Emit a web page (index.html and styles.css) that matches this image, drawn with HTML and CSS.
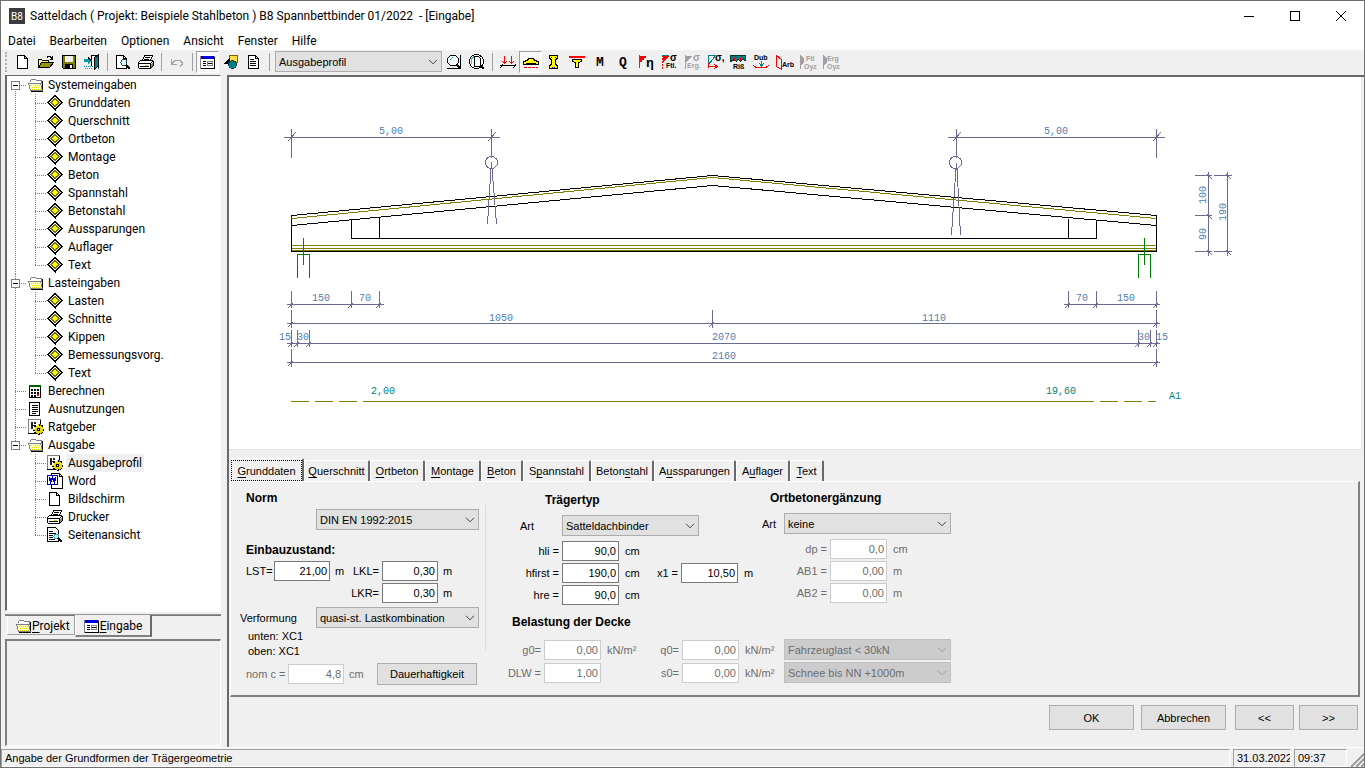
FILE: index.html
```html
<!DOCTYPE html>
<html lang="de">
<head>
<meta charset="utf-8">
<title>Satteldach - B8 Spannbettbinder</title>
<link rel="stylesheet" href="styles.css">
</head>
<body>
<svg class="defs" aria-hidden="true">
  <symbol id="chev" viewBox="0 0 10 6"><path d="M1 .8L5 4.8L9 .8" fill="none" stroke="currentColor"/></symbol>
  <symbol id="diamond" viewBox="0 0 16 16"><path d="M8 .5L15 7.500L8 14.500L1 7.500z" fill="#fff" stroke="#000"/><path d="M8 3.500L12 7.500L8 11.500L4 7.500z" fill="#ff0" stroke="#707020"/><path d="M8.500 0v1M8.500 14v2" stroke="#000"/></symbol>
  <symbol id="folder" viewBox="0 0 16 16"><path d="M2.500 4.500v-1l1-1h4l1 1h5v3" fill="#fff" stroke="#808080"/><path d="M.5 6.500h12l2 7h-12z" fill="#ffffc0" stroke="#808080"/><path d="M14.500 4v9M3 14.500h12" fill="none" stroke="#000"/><path d="M3 8.500h1M5 8.500h1M7 8.500h1M9 8.500h1M11 8.500h1M4 10.500h1M6 10.500h1M8 10.500h1M10 10.500h1M4 12.500h1M6 12.500h1M8 12.500h1M10 12.500h1M12 12.500h1" stroke="#e8e000"/></symbol>
  <symbol id="page" viewBox="0 0 16 16"><path d="M2.500 1.500h7l3 3v10h-10zM9.500 1.500v3h3" fill="#fff" stroke="#000"/></symbol>
  <symbol id="printer" viewBox="0 0 16 16"><path d="M4.500 6.500l2-5h8l-2 5" fill="#fff" stroke="#000"/><path d="M7 3.500h5M6 5.500h5" stroke="#000"/><path d="M.5 8.500l2-2h12l1 1v4l-3 3h-11l-1-1z" fill="#fff" stroke="#000"/><path d="M1 9.500h11l3-2M12.500 10v4M2 12.500h9" fill="none" stroke="#000"/><path d="M7 11h3" stroke="#e0d000"/><path d="M13 10l2-2v3l-2 2z" fill="#808080"/></symbol>
  <symbol id="gear" viewBox="0 0 16 16"><path d="M.5 .5h12v14H.5z" fill="#fff" stroke="#808080"/><path d="M0 14.500h9M12.500 1v4" stroke="#000"/><path d="M3 3h2v7H3zM6 3h2v2H6zM5 6h3v1H5z" fill="#222"/><path d="M10.500 5v11M5 10.500h11M6.500 6.500l8 8M14.500 6.500l-8 8" stroke="#000" stroke-width="2"/><path d="M8 7h5l2 2v3l-2 2H8l-1-2V9z" fill="#e8d800"/><path d="M10.500 5v2M10.500 14v1M5 10.500h2M14 10.500h1" stroke="#e8d800"/><path d="M9.500 9.500h2v2h-2z" fill="#fff" stroke="#000"/></symbol>
  <symbol id="form" viewBox="0 0 16 16"><path d="M.5 2.500h14v12H.5z" fill="#fff" stroke="#808080"/><path d="M1 2h13v3H1z" fill="#0000d8"/><path d="M14.500 3v11.500H1" fill="none" stroke="#000"/><path d="M3 7.500h3M3 9.500h3M3 11.500h3" stroke="#000"/><path d="M7.500 7.500h5v4h-5z" fill="#fff" stroke="#808080"/><path d="M8 9.500h4" stroke="#000"/></symbol>
  <symbol id="lines" viewBox="0 0 16 16"><path d="M1.500 1.500h10v13h-10z" fill="#fff" stroke="#000"/><path d="M4 4.500h6M4 6.500h6M4 8.500h6M4 10.500h6M4 12.500h4" stroke="#000"/></symbol>
  <symbol id="preview" viewBox="0 0 16 16"><path d="M1.500 1.500h7l3 3v10h-10zM8.500 1.500v3h3" fill="#fff" stroke="#000"/><circle cx="9" cy="8.500" r="3" fill="#cff" stroke="#404040"/><path d="M11 11l4 4" stroke="#000" stroke-width="2"/></symbol>
</svg>

<header class="titlebar">
  <svg class="logo" viewBox="0 0 16 16"><path d="M0 0h16v16H0z" fill="#3c3c3c"/><text x="2" y="12" fill="#fff" font-size="10">B8</text></svg>
  <h1>Satteldach ( Projekt: Beispiele Stahlbeton ) B8 Spannbettbinder 01/2022&nbsp; - [Eingabe]</h1>
  <div class="syskeys">
    <button aria-label="Minimieren"><svg viewBox="0 0 12 12"><path d="M1 6.500h10" stroke="#000"/></svg></button>
    <button aria-label="Maximieren"><svg viewBox="0 0 12 12"><path d="M1.500 1.500h9v9h-9z" fill="none" stroke="#000"/></svg></button>
    <button aria-label="Schließen"><svg class="smooth" viewBox="0 0 12 12"><path d="M1 1l10 10M11 1L1 11" stroke="#000"/></svg></button>
  </div>
</header>

<nav class="menubar">
  <button>Datei</button><button>Bearbeiten</button><button>Optionen</button><button>Ansicht</button><button>Fenster</button><button>Hilfe</button>
</nav>

<div class="toolbar" role="toolbar" aria-label="Werkzeuge">
  <span class="grip"></span>
  <button class="tool" aria-label="Neu"><svg><use href="#page"/></svg></button>
  <button class="tool" aria-label="Öffnen"><svg viewBox="0 0 16 16"><path d="M.5 13.500v-8h3l1 1h6v3" fill="#ff8" stroke="#000"/><path d="M.5 13.500l3-5h12l-4 5z" fill="#9a9400" stroke="#000"/><path d="M9 3.500l1-1h2l2 2M14.500 1.500v4h-3" fill="none" stroke="#000"/></svg></button>
  <button class="tool" aria-label="Speichern"><svg viewBox="0 0 16 16"><path d="M1.500 1.500h13v13h-12l-1-1z" fill="#808000" stroke="#000"/><path d="M4 2h8v6H4z" fill="#f0f0f0"/><path d="M4 10h8v5H4z" fill="#000"/><path d="M9 11h2v3H9z" fill="#fff"/></svg></button>
  <button class="tool" aria-label="Beenden"><svg viewBox="0 0 16 16"><path d="M7.500 12V1.500h7v12" fill="#fff" stroke="#000"/><path d="M10 4l4-3v11l-4 4z" fill="#008080" stroke="#000"/><path d="M0 5h4V2l4 4.500L4 11V8H0z" fill="#00a0a8"/><path d="M4 3.500l3 3" stroke="#000"/><path d="M0 12.500h9M1 14.500h8M14 14.500h2" stroke="#00a0a8" stroke-dasharray="1 1"/></svg></button>
  <span class="sep"></span>
  <button class="tool" aria-label="Seitenansicht"><svg><use href="#preview"/></svg></button>
  <button class="tool" aria-label="Drucken"><svg><use href="#printer"/></svg></button>
  <span class="sep"></span>
  <button class="tool" aria-label="Rückgängig" disabled><svg viewBox="0 0 16 16"><path d="M2.500 5v5h5M3 9.500l3-3h5l2 2v2l-2 2" fill="none" stroke="#a0a0a0"/></svg></button>
  <span class="sep"></span>
  <button class="tool on" aria-label="Eingabe"><svg><use href="#form"/></svg></button>
  <button class="tool" aria-label="Grafik"><svg viewBox="0 0 16 16"><path d="M6.500 1.500h8v7h-8z" fill="#ffe040" stroke="#806000"/><path d="M0 10l7-7v7z" fill="#000"/><circle cx="9.500" cy="10.500" r="4" fill="#008080" stroke="#003860"/></svg></button>
  <button class="tool" aria-label="Text"><svg viewBox="0 0 16 16"><path d="M2.500 1.500h7l3 3v10h-10zM9.500 1.500v3h3" fill="#fff" stroke="#000"/><path d="M4 5.500h4M4 7.500h6M4 9.500h6M4 11.500h6" stroke="#000"/></svg></button>
  <span class="sep"></span>
  <span class="combo profile"><select aria-label="Profil"><option>Ausgabeprofil</option></select><svg><use href="#chev"/></svg></span>
  <button class="tool" aria-label="Zoom Fenster"><svg viewBox="0 0 16 16"><path d="M14.500 1v13.500H1" fill="none" stroke="#000"/><circle cx="7" cy="6.500" r="5.500" fill="#fff" stroke="#000"/><path d="M4 6l3-3" stroke="#0cc"/><path d="M10.500 10.500l4 4" stroke="#000" stroke-width="2"/></svg></button>
  <button class="tool" aria-label="Zoom alles"><svg viewBox="0 0 16 16"><circle cx="7.500" cy="7.500" r="7" fill="#fff" stroke="#000"/><path d="M2.500 10V5l3-3" stroke="#0dd" fill="none"/><path d="M5.500 2.500h4l2 2v8h-6z" fill="#fff" stroke="#000"/><path d="M12 12l3 3" stroke="#000" stroke-width="2"/></svg></button>
  <span class="sep"></span>
  <button class="tool" aria-label="Lasten"><svg viewBox="0 0 16 16"><path d="M0 11.500h16M.5 14l2-4M13.500 14l2-4" stroke="#000"/><path d="M4.500 2v8M2.500 7.500l2 2l2-2M11.500 2v8M9.500 7.500l2 2l2-2" fill="none" stroke="#f00"/></svg></button>
  <button class="tool on" aria-label="System"><svg viewBox="0 0 16 16"><path d="M.5 10.500v-3l4-1l1-2h5l1 2l4 1v3z" fill="#ff0" stroke="#000"/><path d="M3 9.500h10" stroke="#000"/><path d="M1 13.500h14" stroke="#f00" stroke-dasharray="3 1"/></svg></button>
  <button class="tool" aria-label="Querschnitt I"><svg viewBox="0 0 16 16"><path d="M3.500 1.500h8v3l-2 1v5l2 1v3h-8v-3l2-1v-5l-2-1z" fill="#ff0" stroke="#000"/><path d="M5 3h1M9 3h1M6 13h1M8 13h1" stroke="#00f"/></svg></button>
  <button class="tool" aria-label="Querschnitt T"><svg viewBox="0 0 16 16"><path d="M0 2h16v2H0z" fill="#f00"/><path d="M3.500 5.500h9v2l-3 1v5h-3v-5l-3-1z" fill="#ff0" stroke="#000"/></svg></button>
  <button class="tool" aria-label="Moment"><svg viewBox="0 0 16 16"><text class="big" x="4" y="12">M</text></svg></button>
  <button class="tool" aria-label="Querkraft"><svg viewBox="0 0 16 16"><text class="big" x="4" y="12">Q</text></svg></button>
  <button class="tool" aria-label="Ausnutzung"><svg viewBox="0 0 16 16"><path d="M1.500 1v13" stroke="#008080"/><path d="M2 2h6v2H6v2H4v2H2z" fill="#f00"/><text class="eta" x="8" y="13">η</text></svg></button>
  <button class="tool" aria-label="Spannung Fertigteil"><svg viewBox="0 0 16 16"><path d="M1.500 1v14" stroke="#f00" stroke-dasharray="2 1"/><path d="M2 2h6L2 8z" fill="#f00"/><path d="M1 1.500h7" stroke="#008080"/><text class="sig" x="9" y="7">σ</text><text x="5" y="14">Ftl.</text></svg></button>
  <button class="tool" aria-label="Spannung Ergänzung" disabled><svg class="dim" viewBox="0 0 16 16"><path d="M1.500 1v14" stroke="#a0a0a0"/><path d="M2 2h6L2 8z" fill="#a0a0a0"/><text class="sig" x="9" y="7">σ</text><text x="3" y="14">Erg.</text></svg></button>
  <button class="tool" aria-label="Spannungen"><svg viewBox="0 0 16 16"><path d="M1.500 14V1.500h7L2 10" fill="none" stroke="#008080"/><path d="M1 12.500h9M7 10l3 2.500L7 15M1.500 9v5" stroke="#f00" fill="none"/><text class="sig" x="8" y="7">σ,</text></svg></button>
  <button class="tool" aria-label="Riss"><svg viewBox="0 0 16 16"><path d="M.5 1.500h15v5l-3-1l-2 2l-2-2l-2 2l-2-2l-4 2z" fill="#008080" stroke="#003838"/><path d="M4 7V3M10 7V3" stroke="#f00"/><text x="3" y="15">Riß</text></svg></button>
  <button class="tool" aria-label="Dübel"><svg viewBox="0 0 16 16"><text x="1" y="6">Dub</text><path d="M8.500 7v5M6 9l2.500 3L11 9" fill="none" stroke="#008080"/><path d="M0 11l3 2.500h10L16 11" fill="none" stroke="#f00"/></svg></button>
  <button class="tool" aria-label="Arbeit"><svg viewBox="0 0 16 16"><path d="M.5 12.500v-11l5 4v10z" fill="none" stroke="#f00"/><text x="6" y="13">Arb</text></svg></button>
  <button class="tool" aria-label="Fertigteil yz" disabled><svg class="dim" viewBox="0 0 16 16"><path d="M1 1v14h1v-4l3-3V4L2 2V1z" fill="#a0a0a0"/><text x="7" y="7">Ftl</text><text x="5" y="15">Oyz</text></svg></button>
  <button class="tool" aria-label="Ergänzung yz" disabled><svg class="dim" viewBox="0 0 16 16"><path d="M1 1v14h1v-4l3-3V4L2 2V1z" fill="#a0a0a0"/><text x="5" y="7">Erg</text><text x="5" y="15">Oyz</text></svg></button>
</div>

<div class="workspace">
  <aside class="side">
    <div class="treebox">
      <ul class="tree">
        <li><div class="node"><button class="toggle" aria-label="Systemeingaben schließen"></button><svg><use href="#folder"/></svg><span>Systemeingaben</span></div>
          <ul>
            <li><svg><use href="#diamond"/></svg><span>Grunddaten</span></li>
            <li><svg><use href="#diamond"/></svg><span>Querschnitt</span></li>
            <li><svg><use href="#diamond"/></svg><span>Ortbeton</span></li>
            <li><svg><use href="#diamond"/></svg><span>Montage</span></li>
            <li><svg><use href="#diamond"/></svg><span>Beton</span></li>
            <li><svg><use href="#diamond"/></svg><span>Spannstahl</span></li>
            <li><svg><use href="#diamond"/></svg><span>Betonstahl</span></li>
            <li><svg><use href="#diamond"/></svg><span>Aussparungen</span></li>
            <li><svg><use href="#diamond"/></svg><span>Auflager</span></li>
            <li><svg><use href="#diamond"/></svg><span>Text</span></li>
          </ul></li>
        <li><div class="node"><button class="toggle" aria-label="Lasteingaben schließen"></button><svg><use href="#folder"/></svg><span>Lasteingaben</span></div>
          <ul>
            <li><svg><use href="#diamond"/></svg><span>Lasten</span></li>
            <li><svg><use href="#diamond"/></svg><span>Schnitte</span></li>
            <li><svg><use href="#diamond"/></svg><span>Kippen</span></li>
            <li><svg><use href="#diamond"/></svg><span>Bemessungsvorg.</span></li>
            <li><svg><use href="#diamond"/></svg><span>Text</span></li>
          </ul></li>
        <li><div class="node leaf"><svg viewBox="0 0 16 16"><path d="M1.500 2.500h11v12h-11z" fill="#fff" stroke="#000"/><path d="M1 2h12v2H1z" fill="#006000"/><path d="M3 6.500h8M3 9.500h8M3 12.500h5" stroke="#000" stroke-width="2" stroke-dasharray="2 1"/><path d="M9 11h2v2H9z" fill="#f00"/></svg><span>Berechnen</span></div></li>
        <li><div class="node leaf"><svg><use href="#lines"/></svg><span>Ausnutzungen</span></div></li>
        <li><div class="node leaf"><svg><use href="#gear"/></svg><span>Ratgeber</span></div></li>
        <li><div class="node"><button class="toggle" aria-label="Ausgabe schließen"></button><svg><use href="#folder"/></svg><span>Ausgabe</span></div>
          <ul>
            <li><svg><use href="#gear"/></svg><span class="picked">Ausgabeprofil</span></li>
            <li><svg viewBox="0 0 16 16"><path d="M4.500 .5h8l3 3v12h-11zM12.500 .5v3h3" fill="#fff" stroke="#000"/><path d="M.5 2.500h10v9H.5z" fill="#fff" stroke="#0000a8"/><path d="M2.500 4l1 5L5.500 5l2 4L8.500 4" fill="none" stroke="#0000c0" stroke-width="1.500"/></svg><span>Word</span></li>
            <li><svg><use href="#page"/></svg><span>Bildschirm</span></li>
            <li><svg><use href="#printer"/></svg><span>Drucker</span></li>
            <li><svg viewBox="0 0 16 16"><path d="M.5 .5h8l3 3v11H.5z" fill="#fff" stroke="#000"/><path d="M2 4.500h4M2 6.500h7M2 8.500h4M2 10.500h4M2 12.500h6" stroke="#000"/><circle cx="9.500" cy="9.500" r="2.500" fill="#8ff" stroke="#60a0a0"/><path d="M11 11l4 4" stroke="#000" stroke-width="1.500"/></svg><span>Seitenansicht</span></li>
          </ul></li>
      </ul>
    </div>
    <div class="sidetabs">
      <button class="stab"><svg><use href="#folder"/></svg><span><u>P</u>rojekt</span></button>
      <button class="stab current"><svg><use href="#form"/></svg><span><u>E</u>ingabe</span></button>
    </div>
    <div class="infobox"></div>
  </aside>

  <main class="content">
    <div class="canvas">
      <svg class="drawing" viewBox="229 77 1132 372" role="img" aria-label="Ansicht des Satteldachbinders">
        <g stroke="#000">
          <path d="M291.500 251.500V215.500L712.500 175.500L1156.500 215.500V251.500zM291.500 225.500L712.500 185.500L1156.500 225.500M351.500 220V238.500H1096.500V221M379.500 217.500V238.500M1068.500 218.500V238.500"/>
        </g>
        <path stroke="#808000" d="M291.500 218.500L712.500 177.500L1156.500 218.500M292 245.500H1156M292 248.500H1156M292 250.500H1156M291 401.500h18M315 401.500h18M339 401.500h18M363 401.500H1094M1100 401.500h18M1124 401.500h18M1148 401.500h8"/>
        <path stroke="#008000" d="M303.500 238V265M297.500 278V254.500H309.500V278M1144.500 238V265M1138.500 278V254.500H1150.500V278"/>
        <g stroke="#6a6a94">
          <path d="M284 137.500H500M291.500 129V158M491.500 129V158M288 141L296 132M488 141L496 132M948 137.500H1165M956.500 129V158M1156.500 129V158M953 141L961 132M1153 141L1161 132"/>
          <circle cx="491.500" cy="162.500" r="6"/><circle cx="955.500" cy="162.500" r="6"/>
          <path d="M491.500 162V169M491 168L487.500 224M492 168L496.500 224M956.500 163V170M956 168L951.500 235M957 168L960.500 235"/>
          <path d="M287 304.500H384M291.500 291V308M351.500 291V308M379.500 291V308M1064 304.500H1160M1068.500 291V308M1096.500 291V308M1156.500 291V308"/>
          <path d="M287 323.500H1160M291.500 310V328M712.500 310V328M1156.500 310V328"/>
          <path d="M287 343.500H1160M291.500 330V347M297.500 330V347M309.500 330V347M1138.500 330V347M1150.500 330V347M1156.500 330V347"/>
          <path d="M287 362.500H1160M291.500 349V367M1156.500 349V367"/>
          <path d="M288 308l5-5M348 308l5-5M376 308l5-5M1065 308l5-5M1093 308l5-5M1153 308l5-5M288 327l5-5M709 327l5-5M1153 327l5-5M288 347l5-5M294 347l5-5M306 347l5-5M1135 347l5-5M1147 347l5-5M1153 347l5-5M288 366l5-5M1153 366l5-5"/>
          <path d="M1208.500 172V256M1227.500 172V256M1195 175.500H1212M1195 215.500H1212M1195 251.500H1212M1214 175.500H1232M1214 251.500H1232M1207 174l5 5M1207 214l5 5M1207 250l5 5M1226 174l5 5M1226 250l5 5"/>
        </g>
        <g class="dims">
          <text x="379" y="134">5,00</text><text x="1044" y="134">5,00</text>
          <text x="312" y="301">150</text><text x="359" y="301">70</text><text x="1076" y="301">70</text><text x="1117" y="301">150</text>
          <text x="489" y="321">1050</text><text x="922" y="321">1110</text>
          <text x="279" y="340">15</text><text x="297" y="340">30</text><text x="712" y="340">2070</text><text x="1138" y="340">30</text><text x="1156" y="340">15</text>
          <text x="712" y="359">2160</text>
          <text transform="translate(1206 204) rotate(-90)">100</text><text transform="translate(1206 240) rotate(-90)">90</text><text transform="translate(1226 221) rotate(-90)">190</text>
        </g>
        <g class="dims axis"><text x="371" y="394">2,00</text><text x="1046" y="394">19,60</text><text x="1169" y="399">A1</text></g>
      </svg>
    </div>

    <div class="sheet">
      <div class="tabs" role="tablist">
        <button role="tab" aria-selected="true"><span><u>G</u>runddaten</span></button>
        <button role="tab"><u>Q</u>uerschnitt</button>
        <button role="tab"><u>O</u>rtbeton</button>
        <button role="tab"><u>M</u>ontage</button>
        <button role="tab"><u>B</u>eton</button>
        <button role="tab">S<u>p</u>annstahl</button>
        <button role="tab">Beton<u>s</u>tahl</button>
        <button role="tab">A<u>u</u>ssparungen</button>
        <button role="tab">A<u>u</u>flager</button>
        <button role="tab"><u>T</u>ext</button>
      </div>
      <form class="panel">
        <section class="norm">
          <h2>Norm</h2>
          <span class="combo wide"><select aria-label="Norm"><option>DIN EN 1992:2015</option></select><svg><use href="#chev"/></svg></span>
          <h2 class="second">Einbauzustand:</h2>
          <div class="pairs">
            <label for="lst">LST=</label><input id="lst" value="21,00"><span>m</span>
            <label for="lkl">LKL=</label><input id="lkl" value="0,30"><span>m</span>
            <label class="lkr" for="lkr">LKR=</label><input id="lkr" value="0,30"><span>m</span>
          </div>
          <div class="deform"><label for="verf">Verformung</label><span class="combo wide"><select id="verf"><option>quasi-st. Lastkombination</option></select><svg><use href="#chev"/></svg></span></div>
          <p class="expo">unten: XC1<br>oben: XC1</p>
          <div class="cover"><label class="off" for="nomc">nom c =</label><input id="nomc" value="4,8" disabled><span class="off">cm</span><button type="button" class="btn">Dauerhaftigkeit</button></div>
        </section>
        <div class="rule"></div>
        <div class="rest">
          <div class="upper">
            <section class="type">
              <h2>Trägertyp</h2>
              <div class="art"><label for="art1">Art</label><span class="combo"><select id="art1"><option>Satteldachbinder</option></select><svg><use href="#chev"/></svg></span></div>
              <div class="dimsgrid">
                <label for="hli">hli =</label><input id="hli" value="90,0"><span>cm</span>
                <label class="c1" for="hf">hfirst =</label><input id="hf" value="190,0"><span>cm</span><label for="x1">x1 =</label><input id="x1" value="10,50"><span>m</span>
                <label class="c1" for="hre">hre =</label><input id="hre" value="90,0"><span>cm</span>
              </div>
            </section>
            <section class="topping">
              <h2>Ortbetonergänzung</h2>
              <div class="art"><label for="art2">Art</label><span class="combo"><select id="art2"><option>keine</option></select><svg><use href="#chev"/></svg></span></div>
              <div class="dimsgrid off">
                <label for="dp">dp =</label><input id="dp" value="0,0" disabled><span>cm</span>
                <label for="ab1">AB1 =</label><input id="ab1" value="0,00" disabled><span>m</span>
                <label for="ab2">AB2 =</label><input id="ab2" value="0,00" disabled><span>m</span>
              </div>
            </section>
          </div>
          <section class="loads">
            <h2>Belastung der Decke</h2>
            <div class="loadgrid off">
              <label for="g0">g0=</label><input id="g0" value="0,00" disabled><span>kN/m²</span>
              <label for="q0">q0=</label><input id="q0" value="0,00" disabled><span>kN/m²</span>
              <span class="combo"><select aria-label="Nutzlast" disabled><option>Fahrzeuglast &lt; 30kN</option></select><svg><use href="#chev"/></svg></span>
              <label for="dlw">DLW =</label><input id="dlw" value="1,00" disabled><span></span>
              <label for="s0">s0=</label><input id="s0" value="0,00" disabled><span>kN/m²</span>
              <span class="combo"><select aria-label="Schneelast" disabled><option>Schnee bis NN +1000m</option></select><svg><use href="#chev"/></svg></span>
            </div>
          </section>
        </div>
      </form>
      <div class="actions">
        <button class="btn">OK</button><button class="btn">Abbrechen</button>
        <div class="steps"><button class="btn">&lt;&lt;</button><button class="btn">&gt;&gt;</button></div>
      </div>
    </div>
  </main>
</div>

<footer class="status">
  <span class="msg">Angabe der Grundformen der Trägergeometrie</span>
  <span class="date">31.03.2022</span>
  <span class="time">09:37</span>
  <svg class="corner" viewBox="0 0 14 14"><path d="M1 14L14 1M6 14l8-8M11 14l3-3" stroke="#a0a0a0" stroke-width="2"/></svg>
</footer>
</body>
</html>
```
FILE: styles.css
```css
* { box-sizing: border-box; }

:root {
  --face: #f0f0f0;
  --shade: #a0a0a0;
  --dark: #696969;
  --ui: Roboto, "Open Sans", sans-serif;
  --small: "Liberation Sans", Arial, sans-serif;
}

body {
  margin: 0;
  min-height: 100vh;
  display: flex;
  flex-direction: column;
  border: 1px solid #707070;
  background: var(--face);
  color: #000;
  font: 11px/14px var(--small);
}

button, input, select { font: inherit; color: inherit; margin: 0; padding: 0; border-radius: 0; }
button { border: 0; background: none; }
svg { shape-rendering: crispEdges; flex: none; }
svg.smooth { shape-rendering: auto; }
.defs { position: absolute; width: 0; height: 0; }
u { text-underline-offset: 2px; }
h1, h2, p, ul { margin: 0; padding: 0; }

/* title and menu */
.titlebar { display: flex; align-items: center; height: 30px; background: #fff; padding-left: 8px; gap: 5px; }
.titlebar h1 { flex: 1; font: 12px/16px var(--ui); }
.logo { width: 16px; height: 16px; font-family: Roboto, sans-serif; }
.syskeys { display: flex; }
.syskeys button { width: 46px; height: 28px; display: grid; place-items: center; }
.syskeys svg { width: 12px; height: 12px; }
.menubar { display: flex; align-items: center; gap: 14px; height: 18px; padding: 2px 0 0 7px; background: #fff; font: 12px/16px var(--ui); }

/* toolbar */
.toolbar { display: flex; align-items: center; height: 26px; padding: 0 0 2px 4px; border-top: 1px solid #fff; }
.grip { width: 3px; height: 20px; margin-right: 3px; border-left: 2px dotted #b0b0b0; }
.tool { width: 23px; height: 22px; display: grid; place-items: center; border: 1px solid transparent; }
.tool.on { background: #f8f8f8; border-color: var(--shade) #fff #fff var(--shade); }
.tool svg { width: 16px; height: 16px; overflow: visible; font: 700 7px/1 "Liberation Sans", sans-serif; }
.tool .dim { fill: var(--shade); }
.tool text.big { font: 700 13px "Liberation Mono", monospace; }
.tool text.eta { font: 700 13px "Liberation Mono", monospace; }
.tool text.sig { font-size: 10px; }
.sep { width: 1px; height: 18px; margin: 0 3px 0 4px; background: var(--shade); }

.combo { display: grid; color: #000; }
.combo > * { grid-area: 1 / 1; }
.combo select { appearance: none; width: 100%; height: 21px; padding: 0 16px 0 3px; border: 1px solid #adadad; background: #e1e1e1; opacity: 1; }
.combo svg { width: 10px; height: 6px; place-self: center end; margin-right: 4px; color: #404040; pointer-events: none; shape-rendering: auto; }
.combo select:disabled { background: #ccc; border-color: #bfbfbf; color: #6d6d6d; }
.combo select:disabled + svg { color: var(--shade); }
.profile { width: 167px; margin: 0 0 0 2px; }

/* left column */
.workspace { flex: 1; display: flex; }
.side { width: 226px; flex: none; display: flex; flex-direction: column; padding: 0 6px 1px 4px; }
.treebox { flex: 1; background: #fff; border: 1px solid #fff; border-top-color: var(--dark); border-left: 2px solid var(--dark); }
.tree, .tree ul { list-style: none; }
.tree { font: 12px/18px var(--ui); }
.tree svg { width: 16px; height: 16px; }
.tree > li {
  background: repeating-linear-gradient(#808080 0 1px, transparent 1px 2px) 8px 0 / 1px 100% no-repeat;
}
.tree > li:first-child { background-position: 8px 9px; }
.tree > li:last-child { background-size: 1px 9px; }
.node {
  display: flex; align-items: center; height: 18px; padding-left: 4px;
  background: repeating-linear-gradient(90deg, #808080 0 1px, transparent 1px 2px) 8px 9px / 12px 1px no-repeat;
}
.node svg { margin-left: 8px; }
.node.leaf svg { margin-left: 17px; }
.node span { padding-left: 4px; }
.toggle { width: 9px; height: 9px; border: 1px solid #808080; background: linear-gradient(#000, #000) center / 5px 1px no-repeat #fff; }
.tree ul li {
  display: flex; align-items: center; height: 18px; padding-left: 40px;
  background:
    repeating-linear-gradient(#808080 0 1px, transparent 1px 2px) 28px 0 / 1px 100% no-repeat,
    repeating-linear-gradient(90deg, #808080 0 1px, transparent 1px 2px) 28px 9px / 12px 1px no-repeat;
}
.tree ul li:last-child { background-size: 1px 9px, 12px 1px; }
.tree ul span { margin-left: 3px; padding: 0 2px; }
.picked { background: var(--face); }

.sidetabs { height: 28px; display: flex; align-items: flex-start; border-top: 1px solid #fff; padding-left: 2px; background: linear-gradient(var(--shade), var(--dark)) 0 2px / 100% 2px no-repeat; }
.stab { display: flex; align-items: center; margin-top: 4px; height: 19px; padding: 2px 4px 0 8px; font: 12px/16px var(--ui); background: var(--face); border: solid var(--shade); border-width: 0 1px 1px 0; border-left: 1px solid #fff; }
.stab svg { width: 16px; height: 16px; }
.stab.current { margin-top: 3px; height: 22px; padding-right: 8px; border-right: 2px solid var(--dark); border-bottom: 2px solid #808080; }
.infobox { height: 107px; border: 1px solid #fff; border-top: 2px solid #808080; border-left: 2px solid #808080; }

/* right column */
.content { flex: 1; min-width: 0; display: flex; flex-direction: column; border: solid var(--dark); border-width: 2px 0 0 2px; padding-right: 2px; }
.canvas { flex: 1; display: flex; background: #fff; border-right: 1px solid #e3e3e3; border-bottom: 1px solid #e3e3e3; }
.drawing { width: 100%; height: 372px; flex: 1; fill: none; }
.dims { font: 10px "Liberation Mono", monospace; fill: #5080b0; }
.axis { fill: #008080; }

.sheet { padding: 8px 2px 0 1px; height: 297px; }
.tabs { display: grid; grid-template-columns: 73px 66px 55px 56px 42px 68px 63px 82px 54px 34px; height: 23px; padding-left: 1px; align-items: end; }
.tabs button { height: 21px; border: solid #fff; border-width: 1px 0 0 1px; border-right: 2px solid var(--dark); border-radius: 2px 2px 0 0; white-space: nowrap; }
.tabs button[aria-selected] { height: 23px; padding: 0; border-left: 0; }
.tabs button span { display: block; height: 21px; padding-top: 3px; border: 1px dotted #000; }

.panel { display: flex; height: 216px; border: 1px solid #fff; border-right: 2px solid #808080; border-bottom: 2px solid #808080; }
h2 { font: 700 12px/14px var(--small); }
input { width: 100%; height: 20px; padding: 0 2px; text-align: right; border: 1px solid #7a7a7a; background: #fff; }
input:disabled { border-color: #ccc; color: #6d6d6d; background: #fff; }
.off { color: #6d6d6d; }
label { white-space: nowrap; }

.norm { width: 254px; padding: 9px 0 0 15px; }
.combo.wide { width: 163px; }
.norm > .combo { margin: 4px 0 0 70px; }
.second { margin: 13px 0 4px; }
.pairs { display: grid; grid-template-columns: 25px 56px 13px 30px 56px 20px; column-gap: 3px; row-gap: 2px; align-items: center; }
.pairs label { text-align: right; }
.pairs span { padding-left: 2px; }
.lkr { grid-column: 4; }
.deform { display: flex; align-items: center; justify-content: space-between; margin: 4px 6px 1px -6px; }
.expo { padding-left: 2px; line-height: 15px; }
.cover { display: flex; align-items: center; margin-top: 4px; }
.cover label { width: 42px; }
.cover input { width: 56px; }
.cover .off + .btn { margin-left: auto; }
.cover span { margin-left: 5px; }
.cover .btn { width: 100px; height: 22px; margin-right: 8px; }
.rule { width: 1px; height: 145px; margin-top: 23px; background: #dcdcdc; }

.rest { flex: 1; }
.upper { display: flex; }
.type { width: 276px; padding: 11px 0 0 19px; }
.type h2 { padding-left: 40px; }
.art { display: flex; align-items: center; margin-top: 8px; }
.type .art { padding-left: 15px; }
.type .art label { width: 42px; }
.type .combo { width: 137px; }
.dimsgrid { display: grid; grid-template-columns: 54px 57px 20px 33px 57px 20px; column-gap: 3px; row-gap: 2px; margin-top: 5px; align-items: center; }
.dimsgrid label, .loadgrid label { text-align: right; }
.dimsgrid span { padding-left: 3px; }
.c1 { grid-column: 1; }
.topping { padding-top: 9px; }
.topping h2 { padding-left: 8px; }
.topping .art label { width: 22px; }
.topping .combo { width: 167px; }
.topping .dimsgrid { grid-template-columns: 65px 57px 20px; }

.loads { padding: 10px 0 0 19px; }
.loads h2 { padding-left: 7px; }
.loadgrid { display: grid; grid-template-columns: 36px 57px 40px 32px 57px 39px 167px; column-gap: 3px; row-gap: 2px; margin-top: 10px; align-items: center; }
.loadgrid > span:not(.combo) { padding-left: 3px; }

.btn { border: 1px solid #adadad; background: #e1e1e1; text-align: center; }
.actions { display: flex; justify-content: flex-end; gap: 7px; margin-top: 8px; padding-right: 2px; }
.actions .btn { width: 85px; height: 25px; }
.steps { display: flex; gap: 5px; margin-left: 2px; }
.steps .btn { width: 59px; }

/* status bar */
.status { display: flex; height: 20px; padding-top: 1px; border-top: 1px solid #fff; gap: 3px; line-height: 17px; }
.status span { border: 1px solid var(--shade); border-right-color: #fff; border-bottom-color: #fff; padding-left: 3px; overflow: hidden; white-space: nowrap; }
.msg { flex: 1; }
.date { width: 58px; }
.time { width: 53px; }
.corner { width: 14px; height: 14px; align-self: flex-end; }
```
